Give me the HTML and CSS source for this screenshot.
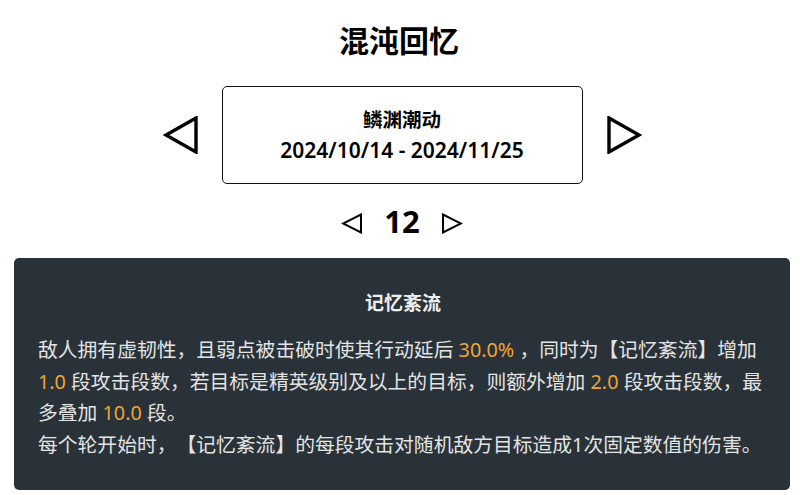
FILE: index.html
```html
<!DOCTYPE html>
<html>

<head>
	<title>混沌回忆</title>
	<meta charset="UTF-8">
	<link rel="stylesheet" href="styles.css">
</head>

<body>
	<div class="page">
		<h1 class="title">混沌回忆</h1>

		<div class="season">
			<button class="arrow arrow-big" title="上一期">
				<svg width="36" height="38" viewBox="0 0 36 38">
					<polygon points="33,2 33,36 3,19" fill="none" stroke="#000" stroke-width="3.4" stroke-linejoin="miter" />
				</svg>
			</button>
			<div class="season-card">
				<div class="season-name">鳞渊潮动</div>
				<div class="season-date">2024/10/14 - 2024/11/25</div>
			</div>
			<button class="arrow arrow-big" title="下一期">
				<svg width="36" height="38" viewBox="0 0 36 38">
					<polygon points="3,2 3,36 33,19" fill="none" stroke="#000" stroke-width="3.4" stroke-linejoin="miter" />
				</svg>
			</button>
		</div>

		<div class="floor">
			<button class="arrow arrow-small" title="上一层">
				<svg width="22" height="21" viewBox="0 0 22 21">
					<polygon points="20,1.5 20,19.5 2,10.5" fill="none" stroke="#000" stroke-width="2" />
				</svg>
			</button>
			<span class="floor-num">12</span>
			<button class="arrow arrow-small" title="下一层">
				<svg width="22" height="21" viewBox="0 0 22 21">
					<polygon points="2,1.5 2,19.5 20,10.5" fill="none" stroke="#000" stroke-width="2" />
				</svg>
			</button>
		</div>

		<div class="buff">
			<div class="buff-title">记忆紊流</div>
			<p class="buff-desc">敌人拥有虚韧性，且弱点被击破时使其行动延后 <span class="hl">30.0%</span> ，同时为【记忆紊流】增加 <span class="hl">1.0</span> 段攻击段数，若目标是精英级别及以上的目标，则额外增加 <span class="hl">2.0</span> 段攻击段数，最多叠加 <span class="hl">10.0</span> 段。<br>每个轮开始时，【记忆紊流】的每段攻击对随机敌方目标造成1次固定数值的伤害。</p>
		</div>
	</div>
</body>

</html>
```

FILE: styles.css
```css
body {
	margin: 0;
	background: #fff;
	color: #000;
	font-family: "Noto Sans", "Noto Sans CJK SC", sans-serif;
	text-spacing-trim: space-all;
}

.page {
	display: flex;
	flex-direction: column;
	align-items: center;
	margin: 0 10px 0 14px;
	padding-top: 21px;
}

.title {
	margin: 0 6px 0 0;
	font-size: 30px;
	line-height: 40px;
	font-weight: bold;
}

/* 期数切换 */
.season {
	display: flex;
	align-items: center;
	gap: 23px;
	margin-top: 25px;
}

.arrow {
	display: flex;
	align-items: center;
	justify-content: center;
	padding: 0;
	border: none;
	background: none;
	cursor: pointer;
}

.season-card {
	box-sizing: border-box;
	width: 361px;
	height: 98px;
	border: 1.5px solid #111;
	border-radius: 5px;
	display: flex;
	flex-direction: column;
	align-items: center;
	justify-content: center;
	gap: 5px;
	font-weight: 600;
}

.season-name {
	font-size: 19.5px;
	line-height: 25px;
}

.season-date {
	font-size: 21px;
	line-height: 26px;
}

/* 层数切换 */
.floor {
	display: flex;
	align-items: center;
	gap: 21px;
	height: 40px;
	margin-top: 17px;
}

.floor-num {
	font-size: 31px;
	font-weight: bold;
	line-height: 40px;
}

.arrow-small {
	margin-top: 4px;
}

/* 增益说明 */
.buff {
	align-self: stretch;
	margin-top: 17px;
	padding: 30px 22px 30px 24px;
	background: #283238;
	border-radius: 5px;
	color: #e4e4e4;
}

.buff-title {
	text-align: center;
	font-size: 19px;
	line-height: 31px;
	font-weight: bold;
	color: #eee;
	margin-bottom: 15px;
}

.buff-desc {
	margin: 0;
	font-size: 19.8px;
	line-height: 31.5px;
}

.hl {
	color: #f0a43a;
}
```
